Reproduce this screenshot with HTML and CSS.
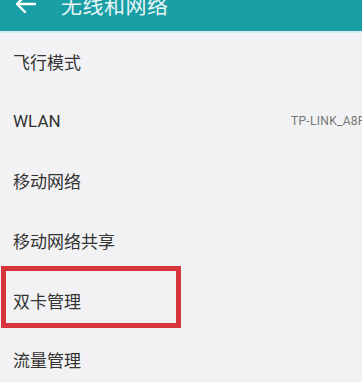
FILE: index.html
```html
<html>
  <head>
    <meta charset="utf-8">
    <title>无线和网络</title>
    <link rel="stylesheet" href="styles.css">
  </head>
  <body>
    <div class="header">
      <div class="bar">
        <svg class="back" width="22" height="20" viewBox="0 0 22 20">
          <path d="M20 10 H3 M10 2 L2 10 L10 18" fill="none" stroke="#fff" stroke-width="2.4" stroke-linecap="round" stroke-linejoin="round"/>
        </svg>
        <span class="title">无线和网络</span>
      </div>
    </div>

    <ul class="list">
      <li class="row">飞行模式</li>
      <li class="row">
        <span>WLAN</span>
        <span class="value">TP-LINK_A8F2</span>
      </li>
      <li class="row">移动网络</li>
      <li class="row">移动网络共享</li>
      <li class="row marked">双卡管理</li>
      <li class="row">流量管理</li>
    </ul>
  </body>
</html>
```

FILE: styles.css
```css
body {
  margin: 0;
  width: 362px;
  height: 382px;
  overflow: hidden;
  background-color: #f2f2f4;
  font-family: "Roboto", "Noto Sans CJK SC", sans-serif;
  color: #333;
}
.header {
  height: 31px;
  overflow: hidden;
  background-color: #1a9ea5;
  border-bottom: 2px solid #d6eef0;
}
.bar {
  height: 56px;
  margin-top: -24px;
  display: flex;
  align-items: center;
  padding-left: 15px;
}
.back {
  margin-right: 24px;
}
.title {
  font-size: 21px;
  color: #e8f6f6;
  letter-spacing: 0.5px;
}
.list {
  list-style-type: none;
  margin: -1px 0 0;
  padding: 0;
}
.row {
  position: relative;
  height: 59.6px;
  display: flex;
  align-items: center;
  padding-left: 13px;
  font-size: 17px;
  white-space: nowrap;
}
.value {
  margin-left: auto;
  width: 71px;
  font-size: 12px;
  color: #777;
  letter-spacing: 0.3px;
}
.marked::after {
  content: "";
  position: absolute;
  left: 1px;
  top: -4px;
  width: 170px;
  height: 52px;
  border: 5px solid #d8353f;
}
```
